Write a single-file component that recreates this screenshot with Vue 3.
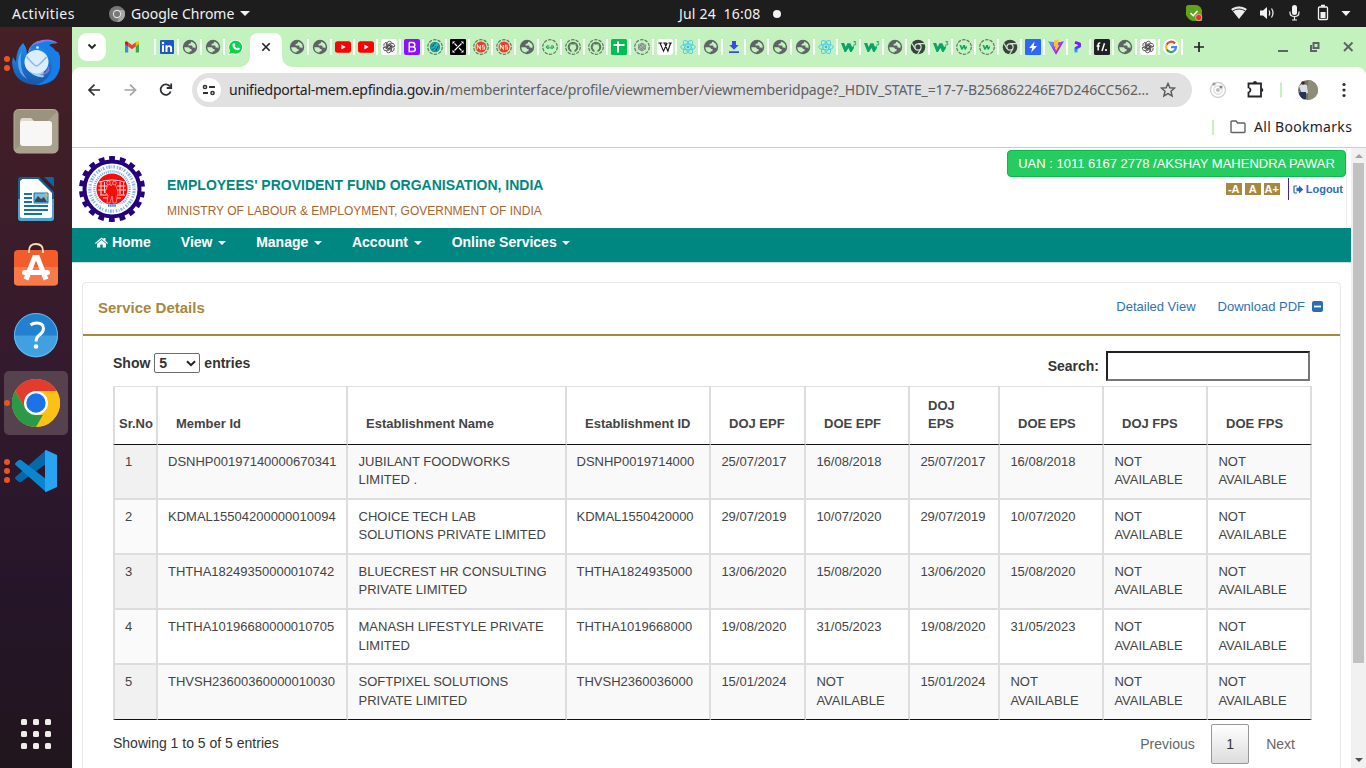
<script setup>
const tabsLeft = ['gmail', 'linkedin', 'globe', 'globe', 'whatsapp']
const tabsRight = [
  'globe', 'globe', 'youtube', 'youtube', 'gpt', 'boot', 'teal', 'xbox', 'ns', 'ns', 'globe', 'gfg',
  'github', 'github', 'sheets', 'gem', 'wiki', 'react', 'globe', 'download', 'globe', 'globe', 'globe',
  'react', 'w3', 'w3', 'globe', 'chrome', 'w3', 'w3ring', 'w3ring', 'chrome', 'bolt', 'vite', 'pee',
  'ff', 'globe', 'gpt', 'google'
]
const menu = ['View', 'Manage', 'Account', 'Online Services']
const heads = ['Sr.No', 'Member Id', 'Establishment Name', 'Establishment ID', 'DOJ EPF', 'DOE EPF', 'DOJ EPS', 'DOE EPS', 'DOJ FPS', 'DOE FPS']
const NA = 'NOT AVAILABLE'
const rows = [
  ['1', 'DSNHP00197140000670341', 'JUBILANT FOODWORKS LIMITED .', 'DSNHP0019714000', '25/07/2017', '16/08/2018', '25/07/2017', '16/08/2018', NA, NA],
  ['2', 'KDMAL15504200000010094', 'CHOICE TECH LAB SOLUTIONS PRIVATE LIMITED', 'KDMAL1550420000', '29/07/2019', '10/07/2020', '29/07/2019', '10/07/2020', NA, NA],
  ['3', 'THTHA18249350000010742', 'BLUECREST HR CONSULTING PRIVATE LIMITED', 'THTHA1824935000', '13/06/2020', '15/08/2020', '13/06/2020', '15/08/2020', NA, NA],
  ['4', 'THTHA10196680000010705', 'MANASH LIFESTYLE PRIVATE LIMITED', 'THTHA1019668000', '19/08/2020', '31/05/2023', '19/08/2020', '31/05/2023', NA, NA],
  ['5', 'THVSH23600360000010030', 'SOFTPIXEL SOLUTIONS PRIVATE LIMITED', 'THVSH2360036000', '15/01/2024', NA, '15/01/2024', NA, NA, NA]
]
</script>

<template>
  <div class="desktop">
    <svg class="defs" width="0" height="0" aria-hidden="true">
      <defs>
        <linearGradient id="gBlue" x1="0" y1="0" x2="0" y2="1"><stop offset="0" stop-color="#1f8ff2" /><stop offset="1" stop-color="#1757a8" /></linearGradient>
        <linearGradient id="gVite" x1="0" y1="0" x2="1" y2="1"><stop offset="0" stop-color="#41b6ff" /><stop offset=".6" stop-color="#b41cff" /><stop offset="1" stop-color="#9a20ff" /></linearGradient>
        <linearGradient id="gPee" x1="0" y1="0" x2="0" y2="1"><stop offset="0" stop-color="#8a12f5" /><stop offset=".5" stop-color="#5a35ff" /><stop offset="1" stop-color="#00cfff" /></linearGradient>
      </defs>
      <symbol id="gmail" viewBox="0 0 16 16">
        <path d="M1 4.2V13q0 .6.6.6h2.6V6.500z" fill="#4285f4" /><path d="M15 4.2V13q0 .6-.6.6h-2.6V6.500z" fill="#34a853" />
        <path d="M11.800 3.400v4L15 5V3.600q0-1.900-2-1.200z" fill="#fbbc04" /><path d="M4.200 3.200v4.200L8 10.200l3.800-2.800V3.200L8 6z" fill="#ea4335" /><path d="M1 3.600V5l3.200 2.400V3.200L3 2.400q-2-.5-2 1.200z" fill="#c5221f" />
      </symbol>
      <symbol id="linkedin" viewBox="0 0 16 16">
        <rect x="1" y="1" width="14" height="14" rx="1" fill="#2057c7" /><path d="M3 6.200h2V13H3zM6.500 6.200h2v1c1-1.700 4.600-1.500 4.600 1.800v4h-2V9.500c0-2-2.600-2-2.600 0V13h-2z" fill="#fff" /><circle cx="4" cy="4" r="1.200" fill="#fff" />
      </symbol>
      <symbol id="globe" viewBox="0 0 16 16">
        <circle cx="8" cy="8" r="7.200" fill="#5f6368" />
        <path d="M2.200 8.300H6q2 .1 2 1.700h1.500v2.300H7.600v1.300Q2.800 13.500 2.200 8.300zM9 2.500v1.100q0 1-1.200 1.200L6.600 5v1.500h3.100q.8 0 .8 1v1h1.500q.8 0 1.300 1Q15 4.500 9 2.500z" fill="#c4f2be" />
      </symbol>
      <symbol id="whatsapp" viewBox="0 0 16 16">
        <path d="M.3 15.900l1-4.200A7.400 7.400 0 1 1 4.800 15z" fill="#fff" /><path d="M1.200 15l.9-3.400A6.500 6.500 0 1 1 4.700 14z" fill="#0bd34b" /><path d="M5.500 4.200l1 .1.800 1.900-.7.900q.9 1.700 2.500 2.300l.9-1 1.900.9q-.1 2.200-2.300 2Q5.600 10.700 4.500 7q-.3-2 1-2.800z" fill="#fff" />
      </symbol>
      <symbol id="youtube" viewBox="0 0 16 16"><rect x="0" y="2.200" width="16" height="11.600" rx="2.500" fill="#f00" /><path d="M6.400 5.600v4.800L10.600 8z" fill="#fff" /></symbol>
      <symbol id="gpt" viewBox="0 0 16 16">
        <rect width="16" height="16" rx="2.500" fill="#fff" />
        <g fill="none" stroke="#333" stroke-width=".75">
          <path id="petal" d="M6.300 8.700V4.300Q6.300 2.200 8.400 2.200q1.500 0 2.200 1.300L7 5.500v2.600" /><use href="#petal" transform="rotate(60 8 8)" /><use href="#petal" transform="rotate(120 8 8)" /><use href="#petal" transform="rotate(180 8 8)" /><use href="#petal" transform="rotate(240 8 8)" /><use href="#petal" transform="rotate(300 8 8)" />
        </g>
      </symbol>
      <symbol id="boot" viewBox="0 0 16 16"><rect width="16" height="16" rx="2" fill="#8a10ff" /><path d="M5.200 3.500H8.500q2.300 0 2.300 2.200T8.500 7.900H5.200M8.500 7.900q2.800 0 2.800 2.300T8.500 12.500H5.200V3.500" fill="none" stroke="#fff" stroke-width="1.400" /></symbol>
      <symbol id="ring" viewBox="0 0 16 16"><circle cx="8" cy="8" r="7.300" fill="none" stroke="#5f7b62" stroke-width="1.200" stroke-dasharray="3.400 1.200" /></symbol>
      <symbol id="teal" viewBox="0 0 16 16"><use href="#ring" /><circle cx="8" cy="8" r="5.200" fill="#1b8f9c" /><path d="M5 6h6M4 9h8M7 4v8M10 4v7" stroke="#27d2d9" stroke-width=".9" /><path d="M5.500 7.500l2-3M9 11.500l2-4M6 10.500l2-2" stroke="#163e54" /></symbol>
      <symbol id="xbox" viewBox="0 0 16 16"><rect width="16" height="16" rx="1" fill="#000" /><path d="M4.500 4.500l2.500 2.500M11.500 4.500l-7 7M9 9l2.500 2.500" stroke="#fff" stroke-width="1.100" /><path d="M2.500 2.500h2.800L2.500 5.300zM13.500 2.500v2.800l-2.800-2.800zM2.500 13.500v-2.800l2.800 2.800zM13.500 13.500h-2.800l2.800-2.800z" fill="#fff" /></symbol>
      <symbol id="ns" viewBox="0 0 16 16"><use href="#ring" /><circle cx="8" cy="8" r="5.500" fill="#ec3a26" /><path d="M4.300 10.200V6l3 4V6M11.500 6.200H9.400v1.800h2.100v2H9" fill="none" stroke="#fbd9cf" stroke-width="1.100" /></symbol>
      <symbol id="gfg" viewBox="0 0 16 16"><use href="#ring" /><path d="M7.200 7q-3-1-3 1t3 1.300V8.100H3.800M8.800 7q3-1 3 1t-3 1.300V8.100h3.400" fill="none" stroke="#2fa65c" stroke-width="1" /></symbol>
      <symbol id="github" viewBox="0 0 16 16"><use href="#ring" /><circle cx="8" cy="8" r="5.300" fill="#5c7560" /><path d="M6.500 13.500v-2.500Q4.500 10.300 4.700 7.800L5.500 6.500l-.1-1.600 1.500.7h2.200l1.500-.7-.1 1.600.8 1.300q.2 2.500-1.800 3.200v2.500z" fill="#c4f2be" /></symbol>
      <symbol id="sheets" viewBox="0 0 16 16"><rect width="16" height="16" rx="1.500" fill="#00bd54" /><path d="M2.500 6h11M7 2.500v11" stroke="#fff" stroke-width="2" /></symbol>
      <symbol id="gem" viewBox="0 0 16 16"><use href="#ring" /><path d="M8 3.500l4 2.200v4.600l-4 2.200-4-2.200V5.700z" fill="#86958a" /><path d="M5 6l5 5M7 4.800l4.500 4.500M11 5.500L5 10" stroke="#b8c2b8" stroke-width=".7" /></symbol>
      <symbol id="wiki" viewBox="0 0 16 16"><rect width="16" height="16" rx="3" fill="#fff" /><path d="M1.300 4h4M6.300 4h3.500M11.500 4h3.300M3 4l3.500 8.200L10.200 4M7.500 4l3.400 8.200L13.600 4" fill="none" stroke="#111" stroke-width="1.100" /></symbol>
      <symbol id="react" viewBox="0 0 16 16"><g fill="none" stroke="#4dcfe3" stroke-width="1"><ellipse cx="8" cy="8" rx="7.300" ry="2.900" /><ellipse cx="8" cy="8" rx="7.300" ry="2.900" transform="rotate(60 8 8)" /><ellipse cx="8" cy="8" rx="7.300" ry="2.900" transform="rotate(120 8 8)" /></g><circle cx="8" cy="8" r="1.400" fill="#35bcd6" /></symbol>
      <symbol id="download" viewBox="0 0 16 16"><path d="M6 2h4v4h2.700L8 10.700 3.300 6H6zM3 12.300h10V14H3z" fill="#354bea" /></symbol>
      <symbol id="w3" viewBox="0 0 16 16"><path d="M0 4h3.200l1.500 4L6.400 4.200h3l1.800 4L12.600 6l.4 3-2.400 4H9.200L7.500 9 5 13H3.500z" fill="#0ba466" /><path d="M12.500 2.600h2.300L13.700 4q1.500.1 1.200 1.400-.5 1-2.400.4" fill="none" stroke="#0ba466" stroke-width=".9" /></symbol>
      <symbol id="w3ring" viewBox="0 0 16 16"><use href="#ring" /><path d="M3.500 6h1.700l.8 2.500L7.300 6h1.600l.8 2.500L11 6.500v2l-1.300 2.300H8.700l-.8-2.200-1.500 2.200H5.300z" fill="#0ba466" /></symbol>
      <symbol id="chrome" viewBox="0 0 16 16"><circle cx="8" cy="8" r="7.300" fill="#3c4043" /><path d="M8 4.600h7M5.100 9.800L1.500 3.800M10.900 9.800l-3.400 5.600" stroke="#c4f2be" stroke-width="1.200" /><circle cx="8" cy="8" r="3.700" fill="#c4f2be" /><circle cx="8" cy="8" r="2.500" fill="#3c4043" /></symbol>
      <symbol id="bolt" viewBox="0 0 16 16"><rect width="16" height="16" rx="1" fill="#2d66fa" /><path d="M9.500 2.500L4.200 9h3L6.200 13.500 12 7H8.700z" fill="#fff" /></symbol>
      <symbol id="vite" viewBox="0 0 16 16"><path d="M0 2.300L8 15.800 16 2.300 8.600 3.600z" fill="url(#gVite)" /><path d="M11 .3L6.200 1.400 5.800 7.500l1.700-.3-.7 3.300 1.200-.3-.5 2.800L11.500 6l-1.800.3z" fill="#ffc61c" /></symbol>
      <symbol id="pee" viewBox="0 0 16 16"><path d="M4 3.300L8.500 4.800 8.500 7.300 5 9.200V13.500" fill="none" stroke="url(#gPee)" stroke-width="3" stroke-linejoin="round" /></symbol>
      <symbol id="ff" viewBox="0 0 16 16"><rect width="16" height="16" rx="1.500" fill="#202124" /><path d="M6.300 4.200q-2.100-.5-2.100 1.300v6M2.600 7h3.200M10.500 4.200L8 12" fill="none" stroke="#fff" stroke-width="1.500" /><circle cx="12" cy="11" r="1.100" fill="#fff" /></symbol>
      <symbol id="google" viewBox="0 0 16 16"><circle cx="8" cy="8" r="8" fill="#fff" /><g fill="none" stroke-width="2.200"><path d="M12 4.500A5 5 0 0 0 3.600 5.700" stroke="#ea4335" /><path d="M3.600 5.700a5 5 0 0 0 0 4.600" stroke="#fbbc05" /><path d="M3.600 10.300a5 5 0 0 0 7.600 1.600" stroke="#34a853" /><path d="M11.200 11.900A5 5 0 0 0 13 8.100H8" stroke="#4285f4" /></g></symbol>
    </svg>

    <div class="topbar">
      <span class="activities">Activities</span>
      <svg class="tb-chrome" width="16" height="16" viewBox="0 0 16 16"><circle cx="8" cy="8" r="8" fill="#777" /><path d="M8 4h7a8 8 0 0 1-7 12l3.500-6z" fill="#a5a5a5" /><circle cx="8" cy="8" r="4.200" fill="#ddd" /><circle cx="8" cy="8" r="3" fill="#777" /></svg>
      <span class="appname">Google Chrome</span>
      <i class="tri"></i>
      <span class="clock">Jul 24&nbsp; 16:08</span>
      <i class="bell"></i>
      <svg class="tray" width="180" height="27" viewBox="0 0 180 27">
        <path d="M3 5h6q7 0 7 8v8h-4q-8 0-12-8V8q0-3 3-3z" fill="#5fa31c" /><path d="M8 5a8 8 0 0 1 0 16q-5 0-8-6V8q0-3 4-3z" fill="#5fa31c" /><path d="M4.500 13l2.700 2.700 4.300-4.700" fill="none" stroke="#fff" stroke-width="1.600" /><circle cx="12.700" cy="17.500" r="3.200" fill="#f02d2d" stroke="#fff" stroke-width=".5" />
        <path d="M45.500 9.500q7.500-5 15 0L53 19z" fill="#eee" /><path d="M45.500 9.200q7.500-4.500 15 0" fill="none" stroke="#fff" stroke-width="1" /><path d="M46.600 11q6.400-4 12.800 0" fill="none" stroke="#1d1d1d" stroke-width=".9" />
        <path d="M74 10.500h3l4-3.500v12l-4-3.500h-3z" fill="#f2f2f2" /><path d="M83 10.500q1.500 2.500 0 5M85.500 8.500q3 4.500 0 9" fill="none" stroke="#e6e6e6" stroke-width="1.300" />
        <rect x="106" y="5" width="5" height="10" rx="2.500" fill="#f2f2f2" /><path d="M104 11.500v1q0 4 4.500 4t4.500-4v-1M108.500 16.500V20M106 20h5" fill="none" stroke="#f2f2f2" stroke-width="1.200" />
        <rect x="132.500" y="7" width="9" height="12.500" rx="1" fill="none" stroke="#f2f2f2" stroke-width="1.300" /><path d="M134.500 12h5v6h-5zM135 4.800h4v2h-4z" fill="#f2f2f2" />
        <path d="M155.500 11h9l-4.500 5z" fill="#f2f2f2" />
      </svg>
    </div>

    <div class="main">
      <div class="dock">
        <div class="slot">
          <div class="dots"><i></i><i></i></div>
          <svg width="48" height="48" viewBox="0 0 48 48">
            <path d="M11 4q4 5 4 11 6-8 14-8l17 6q4 6 2 15-3 18-23 18Q1 45 0 23l1-5 3 5Q4 11 11 4z" fill="url(#gBlue)" />
            <path d="M15.500 14Q18 3 30 1q9-2 16 3-10-1-15 4-8-2-15.500 6z" fill="#8b78e4" /><path d="M28 4q10-4 17 1-4-1-8 1 11 6 11 19 0 8-6 15-8 6-18 6 16-6 16-20 0-11-9-16-8-2-13 0 2-5 10-6z" fill="#167ee6" />
            <circle cx="24.500" cy="23" r="12" fill="#dceefb" /><path d="M14.500 17.500q8 9.500 10 9.500t10-9" fill="none" stroke="#8db9df" stroke-width="1.600" /><path d="M17 32q9 6 15-1-1 6 0 7-9 1-15-6z" fill="#9fd1f5" /><path d="M36.500 27q-1 7-9 9 8 1 10-5" fill="#7774dc" /><circle cx="25.500" cy="8.500" r="1.300" fill="#fff" /><path d="M6 24q0 11 9 16-6-7-6-16-1-7 1-12-4 5-4 12z" fill="#57a8f3" />
          </svg>
        </div>
        <div class="slot">
          <svg width="48" height="48" viewBox="0 0 48 48"><rect x="2" y="2.500" width="44" height="43.500" rx="4.500" fill="#9c937e" stroke="#b5ad99" /><path d="M2.500 43L45 5v37q0 4-4 4H7q-4 0-4.500-3z" fill="#aaa18e" /><path d="M8 15q0-4 3-4h8l4 4v5H8z" fill="#dfdace" /><rect x="8" y="14" width="32" height="25" rx="3" fill="#f8f7f6" /></svg>
        </div>
        <div class="slot">
          <svg width="48" height="48" viewBox="0 0 48 48"><path d="M9 2h18l15 15v26q0 3-3 3H9q-3 0-3-3V5q0-3 3-3z" fill="#15608f" /><path d="M6 24h36v19q0 3-3 3H9q-3 0-3-3z" fill="#4ea4cb" /><path d="M32 2h8q2 0 2 2v8z" fill="#0e669e" /><path d="M10.500 4H26L40 18v23q0 2-2 2H10q-2 0-2-2V6z" fill="#fff" /><path d="M12 19h8M12 23h8M12 27h8M12 31h24M12 35h24M12 39h18" stroke="#1275a6" stroke-width="2" /><path d="M22 18h14v10H22z" fill="#76bde0" stroke="#1275a6" /><path d="M23 27v-2l3-4 3 3 3-2 3 5z" fill="#3e474c" /><path d="M32 18.500h3.500V22z" fill="#f5b52e" /></svg>
        </div>
        <div class="slot">
          <svg width="48" height="48" viewBox="0 0 48 48"><rect x="2" y="7" width="44" height="35.500" rx="4" fill="#f35d2c" /><path d="M2 24h44v15q0 3.500-4 3.500H6q-4 0-4-3.500z" fill="#f77b4a" /><path d="M17 10V8q0-7 7-7t7 7v2" fill="none" stroke="#f5dfb2" stroke-width="1.800" /><path d="M14 36.500l8.500-22h3l8.500 22" fill="none" stroke="#fff" stroke-width="5" /><rect x="10" y="27" width="28" height="5" rx="2.500" fill="#fff" /></svg>
        </div>
        <div class="slot">
          <svg width="48" height="48" viewBox="0 0 48 48"><circle cx="24" cy="24" r="22" fill="#2180d0" /><path d="M2 24.500h44a22 22 0 0 1-44 0z" fill="#41a0e0" /><circle cx="24" cy="24" r="21.500" fill="none" stroke="#68b7ea" /><path d="M18.500 14q2.500-2 6-2 7 0 7 5.500 0 3-3.500 6-4 3-4 7" fill="none" stroke="#fff" stroke-width="3" /><circle cx="24" cy="35.500" r="2.300" fill="#fff" /></svg>
        </div>
        <div class="slot active">
          <div class="dots"><i></i></div>
          <svg width="48" height="48" viewBox="0 0 48 48"><circle cx="24" cy="24" r="24" fill="#fbc116" /><path d="M3.200 12A24 24 0 0 1 44.800 12H24L13.600 30z" fill="#e33b2e" /><path d="M3.200 12l10.400 18 10.400 6h10.400L24 48A24 24 0 0 1 3.200 12z" fill="#2b9a46" /><path d="M34.400 30L24 48A24 24 0 0 0 44.800 12H24z" fill="#fbc116" /><circle cx="24" cy="24" r="12" fill="#fff" /><circle cx="24" cy="24" r="9.700" fill="#1a73e8" /></svg>
        </div>
        <div class="slot">
          <div class="dots"><i></i><i></i><i></i></div>
          <svg width="48" height="48" viewBox="0 0 48 48"><path d="M34 3v14L9 35Q7 36 3.500 32q-1-1.200 0-2z" fill="#0569a9" /><path d="M34 45V32L9 13Q7 12 3.500 16q-1 1.200 0 2z" fill="#0a86d1" /><path d="M34 3l11 5v32l-11 5q-1 0-1-1V4q0-1 1-1z" fill="#28a5f2" /></svg>
        </div>
        <div class="appgrid"><i v-for="n in 9" :key="n"></i></div>
      </div>

      <div class="browser">
        <div class="tabstrip">
          <span class="tabsearch"><svg width="10" height="7" viewBox="0 0 10 7"><path d="M1.500 1.500L5 5l3.500-3.500" fill="none" stroke="#1f1f1f" stroke-width="1.800" /></svg></span>
          <span v-for="(t, i) in tabsLeft" :key="i" class="tab" :class="{ first: i === 0, nosep: i === 4 }"><svg width="16" height="16"><use :href="'#' + t" /></svg></span>
          <span class="activetab"><svg width="10" height="10" viewBox="0 0 10 10"><path d="M1.300 1.300l7.400 7.400M8.700 1.300L1.300 8.700" stroke="#222" stroke-width="1.600" /></svg></span>
          <span v-for="(t, i) in tabsRight" :key="'r' + i" class="tab"><svg width="16" height="16"><use :href="'#' + t" /></svg></span>
          <svg class="plus" width="12" height="12" viewBox="0 0 12 12"><path d="M6 1v10M1 6h10" stroke="#222" stroke-width="1.700" /></svg>
          <svg class="winctl" width="78" height="16" viewBox="0 0 78 16"><path d="M0 12h10" stroke="#5f6368" stroke-width="2" /><path d="M35.500 4h5v5h-5zM33 6v6h6" fill="none" stroke="#5f6368" stroke-width="2" /><path d="M66 3.500l8.500 8.500M74.500 3.500L66 12" stroke="#5f6368" stroke-width="1.900" /></svg>
        </div>

        <div class="toolbar">
          <svg class="navs" width="105" height="20" viewBox="0 0 105 20">
            <path d="M13 10H2.500M7.500 4.700L2 10l5.500 5.300" fill="none" stroke="#303134" stroke-width="1.700" /><path d="M37.500 10h10.500M43 4.700L48.500 10l-5.500 5.300" fill="none" stroke="#a3a5a8" stroke-width="1.700" />
            <path d="M83 6.500A5.200 5.200 0 1 0 83.700 11.500M84.200 3.500V8h-4.500" fill="none" stroke="#303134" stroke-width="1.800" />
          </svg>
          <div class="omnibox">
            <span class="tune"><svg width="14" height="12" viewBox="0 0 14 12"><path d="M7 3h6M1 9h5" stroke="#303134" stroke-width="1.800" /><circle cx="3" cy="3" r="1.600" fill="none" stroke="#303134" stroke-width="1.500" /><circle cx="10.500" cy="9" r="1.600" fill="none" stroke="#303134" stroke-width="1.500" /></svg></span>
            <span class="url"><b>unifiedportal-mem.epfindia.gov.in</b><span class="path">/memberinterface/profile/viewmember/viewmemberidpage?_HDIV_STATE_=17-7-B256862246E7D246CC562…</span></span>
            <svg class="star" width="16" height="16" viewBox="0 0 16 16"><path d="M8 1.500l1.900 4.300 4.600.4-3.500 3.100 1.100 4.600L8 11.500l-4.100 2.400L5 9.300 1.500 6.200l4.600-.4z" fill="none" stroke="#5a5d61" stroke-width="1.500" /></svg>
          </div>
          <svg class="exts" width="165" height="34" viewBox="0 0 165 34">
            <g fill="none" stroke="#cfcfcf"><circle cx="21" cy="17" r="7.500" stroke-width="1.300" /><circle cx="21" cy="17" r="4.200" /></g><circle cx="21" cy="17" r="2" fill="#c0c0c0" /><circle cx="17" cy="11" r="1.600" fill="#999" /><circle cx="24" cy="14" r="1.600" fill="#888" />
            <path d="M51.500 10.500H64V23.500H51.500v-4q2-.6 2-2.500t-2-2.500z" fill="none" stroke="#242528" stroke-width="1.800" /><path d="M56 10q0-2 2-2t2 2zM64.500 15q1.800 0 1.800 2t-1.800 2z" fill="#242528" />
            <path d="M84 9.500v15" stroke="#c4f2be" stroke-width="2" />
            <circle cx="111" cy="17" r="10" fill="#77725e" /><path d="M111 7a10 10 0 0 1 0 20z" fill="#8e8d79" /><path d="M102 13l3-2 5 1 1 8-6 1z" fill="#d8dde8" /><path d="M103 19h6v7l-2 .5q-4-2-5-6z" fill="#25335e" /><circle cx="106" cy="10" r="1.800" fill="#3a2a24" />
            <g fill="#303134"><circle cx="147" cy="11.500" r="1.600" /><circle cx="147" cy="17" r="1.600" /><circle cx="147" cy="22.500" r="1.600" /></g>
          </svg>
        </div>
        <div class="bookmarks">
          <i></i>
          <svg width="16" height="14" viewBox="0 0 16 14"><path d="M1 2q0-1 1-1h4l1.700 2H14q1 0 1 1v7.500q0 1-1 1H2q-1 0-1-1z" fill="none" stroke="#5f6368" stroke-width="1.400" /></svg>
          <span>All Bookmarks</span>
        </div>

        <div class="viewport">
          <div class="page">
            <header>
              <svg class="logo" width="66" height="66" viewBox="0 0 66 66">
                <circle cx="33" cy="33" r="30.500" fill="none" stroke="#24007c" stroke-width="5" stroke-dasharray="5.700 4.946" transform="rotate(-95.300 33 33)" />
                <circle cx="33" cy="33" r="27.500" fill="#fff" stroke="#24007c" stroke-width="4" />
                <circle cx="33" cy="33" r="22.200" fill="none" stroke="#6fa3ee" stroke-width="3.200" stroke-dasharray="1.200 1 2 1.100 .8 1.300 1.500 2" opacity=".85" />
                <circle cx="33" cy="33" r="17.600" fill="none" stroke="#7fa9ee" stroke-width="2.200" stroke-dasharray="1.100 .9" />
                <circle cx="33" cy="33" r="15.500" fill="#f30d0d" />
                <path d="M20 26q13-4 26 0M19.500 30H28M38 30h8.500M19 34h9M38 34h9M21 39h8M37 39h9M24 42h6M36 42h6M22 26v13M25.500 26v11M41 26v12M44.500 26v13" fill="none" stroke="#ffd9d5" stroke-width="1" />
                <path d="M28 31q2-6 4-1 3-6 5 0l2 6-2 11h-3l-1-7-2 7h-3l1-8-3-3z" fill="#f30d0d" stroke="#ffc8c0" stroke-width=".6" /><circle cx="29.500" cy="27" r="1.800" fill="#f30d0d" stroke="#fff" stroke-width=".5" /><circle cx="35.500" cy="27" r="1.800" fill="#f30d0d" stroke="#fff" stroke-width=".5" />
                <path d="M22 47.500q11 2 22 0v4q-11 3-22 0z" fill="#fff" /><path d="M29 49.500h8" stroke="#3f72dc" stroke-width="2.400" stroke-dasharray="1.500 .6" />
              </svg>
              <div class="org"><h1>EMPLOYEES' PROVIDENT FUND ORGANISATION, INDIA</h1><p>MINISTRY OF LABOUR &amp; EMPLOYMENT, GOVERNMENT OF INDIA</p></div>
              <div class="user">
                <span class="uan">UAN : 1011 6167 2778 /AKSHAY MAHENDRA PAWAR</span>
                <div class="tools">
                  <span class="fs">-A</span><span class="fs">A</span><span class="fs">A+</span>
                  <a class="logout"><svg width="11" height="9" viewBox="0 0 11 9"><path d="M4 1H2Q1 1 1 2v5q0 1 1 1h2" fill="none" stroke="#2a66b0" stroke-width="1.200" /><path d="M3.500 2.700H6V.5l4.300 4L6 8.500V6.300H3.500z" fill="#2a66b0" /></svg>Logout</a>
                </div>
              </div>
            </header>
            <nav>
              <a><svg width="13" height="11" viewBox="0 0 13 11"><path d="M0 6L6.500.5 8.500 2.200V1h2v2.800L13 6l-.7.900L6.500 2 .7 6.900z" fill="#fff" /><path d="M2 6.700L6.500 3 11 6.700v3.800H7.700V7.400H5.300v3.100H2z" fill="#fff" /></svg>&nbsp;Home</a>
              <a v-for="m in menu" :key="m">{{ m }}<i></i></a>
            </nav>
            <section class="panel">
              <div class="panelhead"><h2>Service Details</h2><a>Detailed View</a><a>Download PDF</a>
                <svg width="11" height="11" viewBox="0 0 11 11"><rect width="11" height="11" rx="2" fill="#2a6cb6" /><path d="M2 5.500h7" stroke="#fff" stroke-width="1.800" /></svg>
              </div>
              <div class="panelbody">
                <div class="controls">
                  <span>Show</span>
                  <span class="select">5<svg width="10" height="7" viewBox="0 0 10 7"><path d="M1 1.200l4 4 4-4" fill="none" stroke="#222" stroke-width="2" /></svg></span>
                  <span>entries</span>
                  <span class="slabel">Search:</span>
                  <input type="text" aria-label="Search" />
                </div>
                <table>
                  <colgroup><col v-for="n in 10" :key="n" :class="'c' + n" /></colgroup>
                  <thead><tr><th v-for="h in heads" :key="h">{{ h }}</th></tr></thead>
                  <tbody><tr v-for="r in rows" :key="r[0]"><td v-for="(c, i) in r" :key="i">{{ c }}</td></tr></tbody>
                </table>
                <div class="foot"><span>Showing 1 to 5 of 5 entries</span><a>Previous</a><b>1</b><a class="next">Next</a></div>
              </div>
            </section>
          </div>
          <div class="scroll"><i class="up"></i><div class="thumb"></div><i class="down"></i></div>
        </div>
      </div>
    </div>
  </div>
</template>

<style>
body { overflow: hidden; }
</style>

<style scoped>
* { box-sizing: border-box; }
.desktop { width: 1366px; height: 768px; overflow: hidden; display: flex; flex-direction: column; background: #fff; font-family: "Liberation Sans", Arial, sans-serif; }
.defs { position: absolute; }
svg { display: block; flex: none; }
.topbar { height: 27px; flex: none; background: #1d1d1d; color: #f2f2f2; display: flex; align-items: center; font: 14px "Noto Sans", sans-serif; white-space: pre; }
.topbar .activities { width: 97px; padding-left: 12px; letter-spacing: .45px; }
.tb-chrome { margin-left: 12px; }
.appname { margin-left: 6px; width: 105px; }
.tri { margin-left: 4px; border: 5px solid transparent; border-top-color: #f2f2f2; border-bottom: 0; }
.clock { margin-left: 429px; width: 82px; letter-spacing: .2px; }
.bell { width: 8px; height: 8px; border-radius: 50%; background: #f2f2f2; margin-left: 12px; }
.tray { margin-left: auto; }
.main { display: flex; flex: 1; min-height: 0; }
.dock { width: 72px; flex: none; padding: 4px; display: flex; flex-direction: column; gap: 4px; background: linear-gradient(#452025, #341a2d 45%, #26152a 75%, #21151d); }
.slot { position: relative; width: 64px; height: 64px; display: flex; align-items: center; justify-content: center; border-radius: 5px; }
.slot.active { background: #56414f; }
.dots { position: absolute; left: 0; top: 0; height: 64px; display: flex; flex-direction: column; justify-content: center; gap: 3px; }
.dots i { width: 6px; height: 6px; border-radius: 50%; background: #e95420; }
.appgrid { margin: auto auto 15px; display: grid; grid-template-columns: repeat(3, 6px); gap: 6px; }
.appgrid i { width: 6px; height: 6px; border-radius: 1.5px; background: #efeeec; }
.browser { width: 1294px; display: flex; flex-direction: column; background: #c4f2be; }
.tabstrip { height: 40px; flex: none; display: flex; align-items: center; }
.tabsearch { width: 28px; height: 28px; margin: -1px 0 0 6px; border-radius: 9px; background: #fff; display: flex; align-items: center; justify-content: center; }
.tab { width: 23px; height: 16px; flex: none; display: flex; padding-left: 3px; border-right: 2px solid #fff; }
.tab.first { width: 50px; padding-left: 18px; }
.tab.nosep { border-right-color: transparent; width: 25px; }
.activetab { position: relative; width: 32px; height: 34px; flex: none; align-self: flex-end; margin-right: 4px; background: #fff; border-radius: 8px 8px 0 0; display: flex; align-items: center; justify-content: center; padding-bottom: 6px; }
.activetab::before, .activetab::after { content: ""; position: absolute; bottom: 0; width: 10px; height: 10px; }
.activetab::before { left: -10px; background: radial-gradient(circle at 0 0, transparent 9.5px, #fff 10px); }
.activetab::after { right: -10px; background: radial-gradient(circle at 100% 0, transparent 9.5px, #fff 10px); }
.plus { margin-left: 10px; }
.winctl { margin-left: 73px; }
.toolbar { height: 45px; flex: none; display: flex; align-items: center; background: #fff; border-radius: 9px 9px 0 0; }
.navs { margin-left: 15px; width: 105px; }
.omnibox { width: 1000px; height: 34px; border-radius: 17px; background: #e1e1e1; display: flex; align-items: center; flex: none; }
.tune { width: 24px; height: 24px; margin-left: 5px; border-radius: 50%; background: #fff; display: flex; align-items: center; justify-content: center; }
.url { display: flex; margin-left: 8px; width: 921px; font: 14px "Noto Sans", sans-serif; white-space: nowrap; color: #5f6165; }
.url b { width: 216px; font-weight: 400; color: #1f2023; letter-spacing: -.27px; }
.path { letter-spacing: -.13px; }
.star { margin-left: 10px; }
.exts { margin-left: 5px; }
.bookmarks { height: 35px; flex: none; background: #fff; display: flex; align-items: center; padding: 0 14px 5px 0; justify-content: flex-end; font: 14px "Noto Sans", sans-serif; color: #1f2023; }
.bookmarks i { width: 2px; height: 15px; background: #c4f2be; margin-right: 16px; }
.bookmarks span { margin: -2px 0 0 8px; width: 98px; white-space: nowrap; letter-spacing: .3px; }
.viewport { flex: 1; min-height: 0; display: flex; border-top: 1px solid #ccc; background: #fff; }
.page { width: 1279px; overflow: hidden; color: #333; }
header { width: 1275px; height: 80px; border-right: 1px solid #eee; display: flex; }
.logo { margin: 8px 0 0 7px; }
.org { margin-left: 22px; padding-top: 27px; white-space: nowrap; }
h1 { margin: 0; font-size: 14px; line-height: 20px; color: #008781; }
.org p { margin: 8px 0 0; font-size: 12px; line-height: 17px; color: #a9652d; }
.user { margin-left: auto; padding-top: 2px; display: flex; flex-direction: column; align-items: flex-end; }
.uan { width: 339px; height: 27px; border: 1px solid #04bb4c; border-radius: 4px; background: #27cc60; color: #fff; font-size: 13px; line-height: 25px; text-align: center; white-space: nowrap; }
.tools { display: flex; gap: 3px; padding-right: 3px; margin-top: 1px; height: 22px; align-items: center; font-size: 11px; font-weight: 700; }
.fs { width: 16px; height: 12px; background: #a8883f; color: #fff; line-height: 12px; text-align: center; }
.logout { display: flex; align-items: center; gap: 2px; height: 22px; border-left: 1px solid #42239c; padding-left: 4px; margin-left: 5px; color: #2f6cb4; }
nav { height: 35px; background: #008781; border-bottom: 1px solid #cbdcdc; display: flex; padding-left: 23px; gap: 30px; }
nav a { display: flex; align-items: center; height: 28px; color: #fff; font-size: 14px; font-weight: 700; }
nav i { margin: 2px 0 0 5.7px; border: 4px solid transparent; border-top-color: #fff; border-bottom: 0; }
.panel { margin: 19px 0 0 10px; width: 1259px; height: 520px; border: 1px solid #e8e8e8; border-radius: 4px; }
.panelhead { height: 53px; display: flex; align-items: center; padding: 0 17px 3px 15px; border-bottom: 2px solid #a8883f; font-size: 13px; color: #2f70b8; }
h2 { margin: 0 auto 0 0; font-size: 15px; color: #a8883f; }
.panelhead a { margin-left: 22px; padding-bottom: 2px; }
.panelhead svg { margin: -1px 0 0 7px; }
.panelbody { padding: 15px 29px 0 30px; }
.controls { height: 35px; display: flex; align-items: flex-start; font-size: 14px; font-weight: 700; line-height: 24px; white-space: nowrap; }
.select { width: 46px; height: 20px; margin: 2px 4px 0; border: 1px solid #6d6d6d; border-radius: 2px; display: flex; align-items: center; justify-content: space-between; padding: 0 3px 0 4px; }
.slabel { margin-left: auto; padding-top: 3px; }
input { width: 204px; height: 30px; margin: 0 1px 0 7px; border: 2px inset #767676; background: #fff; padding: 0; }
table { width: 1199px; table-layout: fixed; border-collapse: separate; border-spacing: 0; font-size: 13px; line-height: 18.57px; color: #444; }
.c1 { width: 45px; } .c2 { width: 190px; } .c3 { width: 219px; } .c4 { width: 144px; } .c5 { width: 95px; }
.c6, .c8, .c9, .c10 { width: 104px; } .c7 { width: 90px; }
th { height: 59px; padding: 9px 18px 11px; text-align: left; vertical-align: bottom; line-height: 18px; border-top: 1px solid #ddd; border-right: 2px solid #ddd; border-bottom: 1px solid #111; background: #fff; }
th:first-child { padding: 9px 0 11px 4px; }
td { height: 55px; padding: 8px 11px 0 10px; vertical-align: top; border-right: 2px solid #ddd; border-bottom: 2px solid #ddd; }
td:nth-child(n + 5) { padding-right: 4px; padding-left: 10.4px; }
td:nth-child(2), td:nth-child(4) { padding-right: 4px; }
td:nth-child(4) { padding-left: 9.5px; }
td:nth-child(3) { padding-left: 10.500px; }
tbody tr:nth-child(-n + 3) td { line-height: 18.3px; }
th:first-child, td:first-child { border-left: 2px solid #ddd; }
tbody tr:nth-child(odd) td { background: #f9f9f9; }
tbody tr:nth-child(odd) td:first-child { background: #f1f1f1; }
tbody tr:nth-child(even) td:first-child { background: #fafafa; }
tbody tr:last-child td { border-bottom: 1px solid #111; }
.foot { height: 48px; display: flex; align-items: center; font-size: 14px; }
.foot span { margin-right: auto; padding-bottom: 2px; }
.foot a { color: #666; }
.foot b { width: 38px; height: 40px; margin: 0 17px 0 16.5px; border: 1px solid #979797; border-radius: 2px; background: linear-gradient(#fff, #dcdcdc); text-align: center; line-height: 39px; font-weight: 400; }
.foot .next { margin-right: 16px; }
.scroll { width: 15px; background: #f1f1f1; display: flex; flex-direction: column; align-items: center; }
.up, .down { border: 4px solid transparent; }
.up { border-top: 0; border-bottom-color: #a3a3a3; margin: 6px 0 5px; }
.thumb { width: 11px; height: 500px; background: #c1c1c1; }
.down { border-bottom: 0; border-top-color: #505050; margin: auto 0 6px; }
</style>
